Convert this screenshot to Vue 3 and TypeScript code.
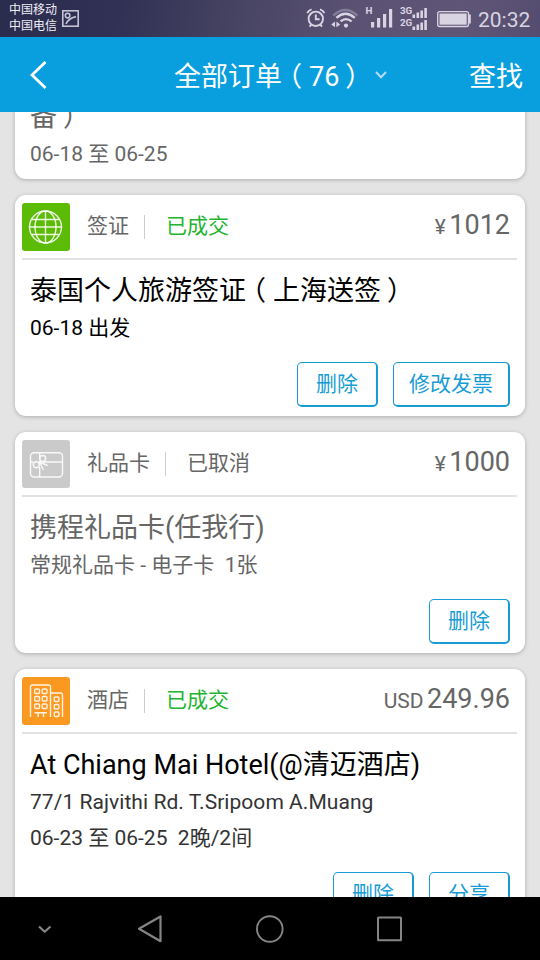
<script setup lang="ts">
type Kind = 'visa' | 'gift' | 'hotel'

interface Order {
  kind: Kind
  label: string
  status: string
  done: boolean
  currency: string
  amount: string
  title: string
  lines: string[]
  actions: string[]
}

const orders: Order[] = [
  {
    kind: 'visa', label: '签证', status: '已成交', done: true, currency: '¥', amount: '1012',
    title: '泰国个人旅游签证（上海送签）', lines: ['06-18 出发'], actions: ['删除', '修改发票'],
  },
  {
    kind: 'gift', label: '礼品卡', status: '已取消', done: false, currency: '¥', amount: '1000',
    title: '携程礼品卡(任我行)', lines: ['常规礼品卡 - 电子卡  1张'], actions: ['删除'],
  },
  {
    kind: 'hotel', label: '酒店', status: '已成交', done: true, currency: 'USD', amount: '249.96',
    title: 'At Chiang Mai Hotel(@清迈酒店)',
    lines: ['77/1 Rajvithi Rd. T.Sripoom A.Muang', '06-23 至 06-25  2晚/2间'],
    actions: ['删除', '分享'],
  },
]

// Full-width brackets are wrapped on their own so that they can be centred in their cell.
const pieces = (text: string): string[] => text.split(/([（）])/).filter(Boolean)
</script>

<template>
  <div class="screen">
    <div class="statusbar">
      <div class="carriers"><span>中国移动</span><span>中国电信</span></div>
      <svg class="shot" width="17" height="17" viewBox="0 0 17 17">
        <rect x="0.8" y="0.8" width="15.4" height="15.4" />
        <circle cx="5.6" cy="5.6" r="2.3" />
        <path d="M4 14C5.500 10 9 7.800 14 6.600" />
      </svg>
      <div class="indicators">
        <svg width="25" height="37" viewBox="306 0 25 37" fill="none" stroke="#d8d4e2" stroke-width="1.9">
          <circle cx="315.8" cy="18.8" r="7.2" />
          <path d="M315.8 14.5V19.3H319.6M307.2 13.2Q308.3 10.2 311.6 9.3M324.4 13.2Q323.3 10.2 320 9.3" />
          <path d="M311.4 24.3L309.6 26.6M320.2 24.3L322 26.6" />
        </svg>
        <svg width="34" height="37" viewBox="331 0 34 37" fill="none" stroke-width="2.3">
          <path d="M333.3 15.6Q345.3 4.5 357.4 15.6" stroke="#837c9b" />
          <path d="M336.4 17.8Q345.5 9.8 354.8 17.8M340.6 21.4Q345.8 16.8 351.6 21.4" stroke="#d8d4e2" />
          <circle cx="346" cy="25.6" r="2.1" fill="#d8d4e2" />
          <path d="M331.2 24.6L335 21.6V27.2ZM336.4 21.6L340.2 24.6L336.4 27.2Z" fill="#d8d4e2" />
        </svg>
        <svg width="35" height="37" viewBox="365 0 35 37" fill="#d8d4e2">
          <text x="365.6" y="14" font-size="9.8" font-weight="700">H</text>
          <path d="M371 22h3.2v5.5H371zM377 18h3.2v9.500H377zM383 14h3.2v13.500H383zM389 9h3.200v18.500H389z" />
        </svg>
        <svg width="37" height="37" viewBox="400 0 37 37" fill="#d8d4e2">
          <text x="400" y="13.800" font-size="9.800" font-weight="700">3G</text>
          <text x="400" y="25.600" font-size="9.800" font-weight="700">2G</text>
          <path d="M412.500 14.500h2.600v3.500h-2.600zM416.500 12.500h2.600v5.500h-2.600zM420.400 10.500h2.600v7.500h-2.600zM424.300 8h2.600v10h-2.600z" />
          <path d="M412.500 26.500h2.600v3.500h-2.600zM416.500 24.500h2.600v5.500h-2.600zM420.400 22.500h2.600v7.500h-2.600zM424.300 20h2.600v10h-2.600z" />
        </svg>
        <svg width="41" height="37" viewBox="437 0 41 37">
          <rect x="437.700" y="11.700" width="30.800" height="14.800" rx="2" fill="none" stroke="#d8d4e2" stroke-width="1.300" />
          <rect x="439.500" y="13.500" width="27.200" height="11.200" fill="#d8d4e2" />
          <path d="M468.500 14.500h2.300v9h-2.300z" fill="#d8d4e2" />
        </svg>
        <span class="clock">20:32</span>
      </div>
    </div>

    <header class="topbar">
      <svg class="back" width="20" height="30" viewBox="0 0 20 30"><path d="M17.500 2L4 15L17.500 28" /></svg>
      <div class="heading">
        <span>全部订单<span class="open">（</span>76<span class="close">）</span></span>
        <svg width="14" height="10" viewBox="0 0 14 10"><path d="M2 2L7 7.200L12 2" /></svg>
      </div>
      <span class="find">查找</span>
    </header>

    <main class="list">
      <article class="card first">
        <div class="body muted">
          <h2>备<span class="close">）</span></h2>
          <p>06-18 至 06-25</p>
        </div>
      </article>

      <article v-for="order in orders" :key="order.kind" class="card">
        <div class="head">
          <div class="badge" :class="order.kind">
            <svg v-if="order.kind === 'visa'" width="48" height="48" viewBox="0 0 48 48">
              <circle cx="23.500" cy="24" r="16" />
              <ellipse cx="23.500" cy="24" rx="10.500" ry="16" />
              <path d="M23.500 8V40M7.500 24H39.500M10 16.500H37M10 31.500H37" />
            </svg>
            <svg v-else-if="order.kind === 'gift'" width="48" height="48" viewBox="0 0 48 48">
              <rect x="8.500" y="12.700" width="32" height="24.300" rx="3.500" />
              <path d="M17.700 12.700V19M17.700 27V37M8.500 22H11M21 22H40.500" />
              <circle cx="20.700" cy="18.500" r="3" />
              <circle cx="14.300" cy="24.700" r="3" />
              <path d="M16.800 22.700L18.500 20.600M17.500 22L25.800 25.600M17.500 22L21.500 30" />
            </svg>
            <svg v-else width="48" height="48" viewBox="0 0 48 48">
              <path d="M8.500 40V10Q8.500 8 10.500 8H26.500Q28.500 8 28.500 10V40M28.500 16H38.500Q40.500 16 40.500 18V40" />
              <path d="M12.500 35.800H25M16.200 36V40M21.500 36V40" />
              <rect x="12.700" y="12" width="4.800" height="4.500" rx="1" />
              <rect x="20.200" y="12" width="4.800" height="4.500" rx="1" />
              <rect x="12.700" y="19.500" width="4.800" height="4.500" rx="1" />
              <rect x="20.200" y="19.500" width="4.800" height="4.500" rx="1" />
              <rect x="12.700" y="27" width="4.800" height="4.500" rx="1" />
              <rect x="20.200" y="27" width="4.800" height="4.500" rx="1" />
              <rect x="32.300" y="20" width="4.600" height="4.500" rx="1" />
              <rect x="32.300" y="27.500" width="4.600" height="4.500" rx="1" />
              <rect x="32.300" y="35" width="4.600" height="4.500" rx="1" />
            </svg>
          </div>
          <span class="label">{{ order.label }}</span>
          <i class="bar"></i>
          <span class="status" :class="{ done: order.done }">{{ order.status }}</span>
          <span class="price"><small>{{ order.currency }}</small>{{ order.amount }}</span>
        </div>
        <div class="body" :class="[order.kind, { muted: !order.done }]">
          <h2><span v-for="(piece, i) in pieces(order.title)" :key="i" :class="{ open: piece === '（', close: piece === '）' }">{{ piece }}</span></h2>
          <p v-for="line in order.lines" :key="line">{{ line }}</p>
        </div>
        <div class="actions">
          <button v-for="action in order.actions" :key="action" type="button">{{ action }}</button>
        </div>
      </article>
    </main>

    <nav class="navbar">
      <svg width="540" height="63" viewBox="0 0 540 63">
        <path d="M39 29.500L44.700 34.700L50.500 29.500" stroke-width="2.200" />
        <path d="M160.500 19.500V44.200L139 31.800Z" stroke-width="2.200" />
        <circle cx="269.800" cy="32" r="12.800" stroke-width="1.900" />
        <rect x="378" y="20.500" width="23" height="22.800" rx="0.500" stroke-width="2" />
      </svg>
    </nav>
  </div>
</template>

<style>
body {
  margin: 0;
  overflow: hidden;
}
</style>

<style scoped>
.screen {
  width: 540px;
  height: 960px;
  display: flex;
  flex-direction: column;
  overflow: hidden;
  background: #e4e4e4;
  font-family: Roboto, "Noto Sans CJK SC", sans-serif;
}
svg {
  display: block;
  flex: none;
}
.open {
  margin: 0 7px 0 -7px;
}
.close {
  margin: 0 -6px 0 6px;
}
.statusbar {
  flex: none;
  height: 37px;
  display: flex;
  align-items: center;
  box-sizing: border-box;
  padding: 0 9px;
  background: linear-gradient(100deg, #2a2c4e 0%, #303154 22%, #484463 45%, #5b5273 65%, #5f5677 85%, #554d70 100%);
}
.carriers {
  display: flex;
  flex-direction: column;
  margin-top: -2px;
  font-size: 12px;
  line-height: 16px;
  color: #f0eef6;
}
.shot {
  margin-left: 5px;
  fill: none;
  stroke: #c4c2d4;
  stroke-width: 1.6;
}
.indicators {
  margin-left: auto;
  display: flex;
  color: #d8d4e2;
}
.clock {
  width: 53px;
  line-height: 41px;
  height: 37px;
  font-size: 21px;
}
.topbar {
  flex: none;
  height: 75px;
  display: flex;
  align-items: center;
  box-sizing: border-box;
  padding: 0 17px 0 28px;
  background: #099fde;
  color: #fff;
  font-size: 27px;
  line-height: 36px;
  white-space: nowrap;
}
.back {
  fill: none;
  stroke: #fff;
  stroke-width: 2.8;
}
.heading {
  display: flex;
  align-items: center;
  margin-left: 126px;
}
.heading > span,
.find {
  padding-top: 4px;
}
.heading svg {
  margin-left: 14px;
  fill: none;
  stroke: #b4dcf0;
  stroke-width: 2;
}
.heading .close {
  margin-right: -12px;
}
.find {
  margin-left: auto;
}
.heading > span {
  padding-right: 0;
}
.list {
  flex: 1;
  min-height: 0;
  overflow: hidden;
  display: flex;
  flex-direction: column;
  gap: 16px;
  padding: 0 15px;
}
.card {
  flex: none;
  box-sizing: border-box;
  padding: 8px 8px 9px 7px;
  border-radius: 11px;
  background: #fff;
  box-shadow: 0 1px 4px rgba(0, 0, 0, 0.24);
}
.card.first {
  margin-top: -26px;
  padding-top: 0;
  padding-bottom: 8px;
}
.head {
  display: flex;
  align-items: center;
  height: 48px;
  padding-bottom: 7px;
  border-bottom: 2px solid #e2e2e2;
  font-size: 21px;
  line-height: 36px;
  color: #666;
}
.badge {
  width: 48px;
  height: 48px;
  border-radius: 3px;
  margin-right: 17px;
}
.badge.visa {
  background: #5cbb05;
}
.badge.gift {
  background: #cacaca;
}
.badge.hotel {
  background: #fb981f;
}
.badge svg {
  fill: none;
  stroke: #fff;
  stroke-opacity: 0.88;
  stroke-width: 1.4;
}
.bar {
  width: 1px;
  height: 24px;
  margin: 0 21px 0 15px;
  background: #ccc;
}
.label,
.status,
.price {
  padding-bottom: 2px;
}
.status.done {
  color: #22b42e;
}
.price {
  margin-left: auto;
  padding-right: 7px;
  font-size: 27px;
}
.price small {
  margin-right: 3.5px;
  font-size: 21px;
}
.body {
  padding: 13px 8px 0;
  color: #000;
}
.body.hotel p {
  color: #333;
}
.body.hotel p:first-of-type {
  letter-spacing: 0.05px;
}
.body.muted {
  color: #666;
}
.body h2,
.body p {
  margin: 0;
  height: 36px;
  line-height: 36px;
  font-weight: 400;
  white-space: pre;
}
.body h2 {
  font-size: 27px;
}
.body p {
  font-size: 21px;
  line-height: 38px;
}
.actions {
  display: flex;
  justify-content: flex-end;
  gap: 15px;
  padding: 17px 7px 0 0;
}
.actions button {
  box-sizing: border-box;
  height: 45px;
  min-width: 81px;
  margin: 0;
  padding: 0 15px;
  border: solid #189cd4;
  border-width: 1px 2px 2px 1px;
  border-radius: 5px;
  background: #fff;
  font: 21px/36px Roboto, "Noto Sans CJK SC", sans-serif;
  color: #189cd4;
}
.navbar {
  flex: none;
  height: 63px;
  background: #000;
}
.navbar svg {
  fill: none;
  stroke: #858585;
  stroke-linejoin: round;
}
</style>
